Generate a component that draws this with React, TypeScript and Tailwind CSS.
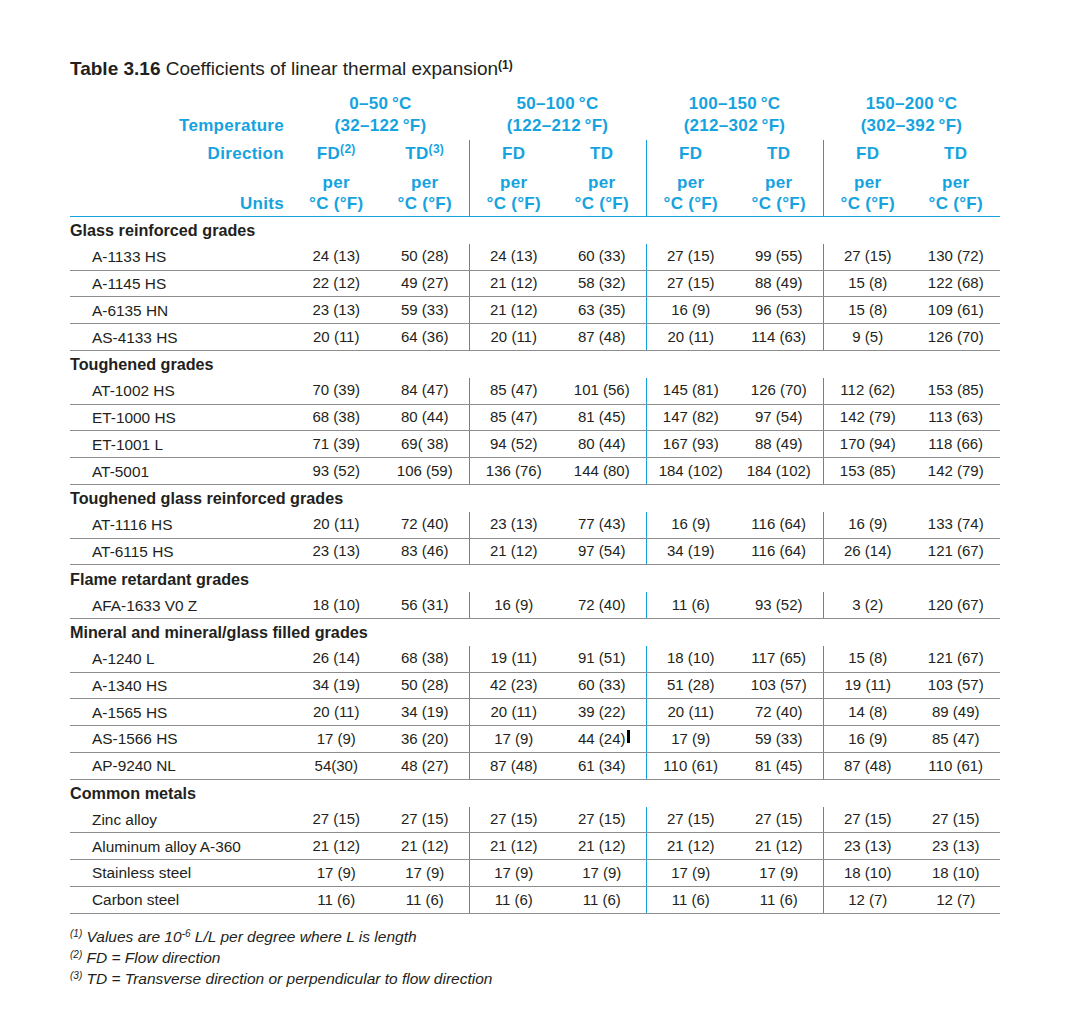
import React from 'react';

type Row = { name: string; v: string[] };
type Section = { title: string; rows: Row[] };

const sections: Section[] = [
  {
    title: 'Glass reinforced grades',
    rows: [
      { name: 'A-1133 HS', v: ['24 (13)', '50 (28)', '24 (13)', '60 (33)', '27 (15)', '99 (55)', '27 (15)', '130 (72)'] },
      { name: 'A-1145 HS', v: ['22 (12)', '49 (27)', '21 (12)', '58 (32)', '27 (15)', '88 (49)', '15 (8)', '122 (68)'] },
      { name: 'A-6135 HN', v: ['23 (13)', '59 (33)', '21 (12)', '63 (35)', '16 (9)', '96 (53)', '15 (8)', '109 (61)'] },
      { name: 'AS-4133 HS', v: ['20 (11)', '64 (36)', '20 (11)', '87 (48)', '20 (11)', '114 (63)', '9 (5)', '126 (70)'] },
    ],
  },
  {
    title: 'Toughened grades',
    rows: [
      { name: 'AT-1002 HS', v: ['70 (39)', '84 (47)', '85 (47)', '101 (56)', '145 (81)', '126 (70)', '112 (62)', '153 (85)'] },
      { name: 'ET-1000 HS', v: ['68 (38)', '80 (44)', '85 (47)', '81 (45)', '147 (82)', '97 (54)', '142 (79)', '113 (63)'] },
      { name: 'ET-1001 L', v: ['71 (39)', '69( 38)', '94 (52)', '80 (44)', '167 (93)', '88 (49)', '170 (94)', '118 (66)'] },
      { name: 'AT-5001', v: ['93 (52)', '106 (59)', '136 (76)', '144 (80)', '184 (102)', '184 (102)', '153 (85)', '142 (79)'] },
    ],
  },
  {
    title: 'Toughened glass reinforced grades',
    rows: [
      { name: 'AT-1116 HS', v: ['20 (11)', '72 (40)', '23 (13)', '77 (43)', '16 (9)', '116 (64)', '16 (9)', '133 (74)'] },
      { name: 'AT-6115 HS', v: ['23 (13)', '83 (46)', '21 (12)', '97 (54)', '34 (19)', '116 (64)', '26 (14)', '121 (67)'] },
    ],
  },
  {
    title: 'Flame retardant grades',
    rows: [
      { name: 'AFA-1633 V0 Z', v: ['18 (10)', '56 (31)', '16 (9)', '72 (40)', '11 (6)', '93 (52)', '3 (2)', '120 (67)'] },
    ],
  },
  {
    title: 'Mineral and mineral/glass filled grades',
    rows: [
      { name: 'A-1240 L', v: ['26 (14)', '68 (38)', '19 (11)', '91 (51)', '18 (10)', '117 (65)', '15 (8)', '121 (67)'] },
      { name: 'A-1340 HS', v: ['34 (19)', '50 (28)', '42 (23)', '60 (33)', '51 (28)', '103 (57)', '19 (11)', '103 (57)'] },
      { name: 'A-1565 HS', v: ['20 (11)', '34 (19)', '20 (11)', '39 (22)', '20 (11)', '72 (40)', '14 (8)', '89 (49)'] },
      { name: 'AS-1566 HS', v: ['17 (9)', '36 (20)', '17 (9)', '44 (24)|', '17 (9)', '59 (33)', '16 (9)', '85 (47)'] },
      { name: 'AP-9240 NL', v: ['54(30)', '48 (27)', '87 (48)', '61 (34)', '110 (61)', '81 (45)', '87 (48)', '110 (61)'] },
    ],
  },
  {
    title: 'Common metals',
    rows: [
      { name: 'Zinc alloy', v: ['27 (15)', '27 (15)', '27 (15)', '27 (15)', '27 (15)', '27 (15)', '27 (15)', '27 (15)'] },
      { name: 'Aluminum alloy A-360', v: ['21 (12)', '21 (12)', '21 (12)', '21 (12)', '21 (12)', '21 (12)', '23 (13)', '23 (13)'] },
      { name: 'Stainless steel', v: ['17 (9)', '17 (9)', '17 (9)', '17 (9)', '17 (9)', '17 (9)', '18 (10)', '18 (10)'] },
      { name: 'Carbon steel', v: ['11 (6)', '11 (6)', '11 (6)', '11 (6)', '11 (6)', '11 (6)', '12 (7)', '12 (7)'] },
    ],
  },
];

const temps = [
  { c: '0\u201350\u2009°C', f: '(32\u2013122\u2009°F)' },
  { c: '50\u2013100\u2009°C', f: '(122\u2013212\u2009°F)' },
  { c: '100\u2013150\u2009°C', f: '(212\u2013302\u2009°F)' },
  { c: '150\u2013200\u2009°C', f: '(302\u2013392\u2009°F)' },
];

function Value({ text }: { text: string }) {
  if (text.endsWith('|')) {
    return (
      <span className="relative">
        {text.slice(0, -1)}
        <span className="absolute left-full top-[2px] ml-[1px] h-[13px] w-[3px] bg-black" />
      </span>
    );
  }
  return <span>{text}</span>;
}

export default function App() {
  return (
    <div className="min-h-[1016px] w-[1068px] bg-white pl-[70px] pt-[57px] font-['Liberation_Sans',Arial,sans-serif] text-[#231f20]">
      <h1 className="text-[19px] leading-[24px]">
        <span className="font-bold">Table 3.16</span> Coefficients of linear thermal expansion
        <sup className="text-[12px] font-bold">(1)</sup>
      </h1>

      <div className="mt-[12px] w-[930px]">
        {/* Temperature row */}
        <div className="grid h-[47px] grid-cols-[222px_repeat(4,177px)] text-[17px] font-bold leading-[22px] tracking-[0.3px] text-[#15a3df]">
          <div className="pr-[8px] pt-[22px] text-right">Temperature</div>
          {temps.map((t) => (
            <div key={t.c} className="text-center">
              <div>{t.c}</div>
              <div>{t.f}</div>
            </div>
          ))}
        </div>

        {/* Direction row */}
        <div className="grid h-[27px] grid-cols-[222px_repeat(8,88.5px)] text-[17px] font-bold leading-[27px] tracking-[0.3px] text-[#15a3df]">
          <div className="pr-[8px] text-right">Direction</div>
          {[0, 1, 2, 3, 4, 5, 6, 7].map((i) => (
            <div
              key={i}
              className={i > 0 && i % 2 === 0 ? 'border-l border-[#15a3df] text-center' : 'text-center'}
            >
              {i % 2 === 0 ? 'FD' : 'TD'}
              {i === 0 && <sup className="text-[12px]">(2)</sup>}
              {i === 1 && <sup className="text-[12px]">(3)</sup>}
            </div>
          ))}
        </div>

        {/* Units row */}
        <div className="grid h-[50px] grid-cols-[222px_repeat(8,88.5px)] border-b border-[#15a3df] text-[17px] font-bold leading-[21px] tracking-[0.3px] text-[#15a3df]">
          <div className="pr-[8px] pt-[26px] text-right">Units</div>
          {[0, 1, 2, 3, 4, 5, 6, 7].map((i) => (
            <div
              key={i}
              className={
                i > 0 && i % 2 === 0
                  ? 'border-l border-[#15a3df] pt-[5px] text-center'
                  : 'pt-[5px] text-center'
              }
            >
              <div>per</div>
              <div>°C (°F)</div>
            </div>
          ))}
        </div>

        {sections.map((s) => (
          <div key={s.title}>
            <div className="flex h-[26.8px] items-center text-[16.2px] font-bold">{s.title}</div>
            {s.rows.map((r) => (
              <div
                key={r.name}
                className="grid h-[26.8px] grid-cols-[222px_repeat(8,88.5px)] items-stretch border-b border-[#8d8d8d] text-[15px]"
              >
                <div className="flex items-center pl-[22px] text-[15.4px]">{r.name}</div>
                {r.v.map((val, i) => (
                  <div
                    key={i}
                    className={
                      i > 0 && i % 2 === 0
                        ? 'flex items-center justify-center border-l border-[#15a3df]'
                        : 'flex items-center justify-center'
                    }
                  >
                    <Value text={val} />
                  </div>
                ))}
              </div>
            ))}
          </div>
        ))}
      </div>

      <div className="mt-[12px] text-[15.5px] italic leading-[21px]">
        <div>
          <sup className="text-[10px]">(1)</sup> Values are 10<sup className="text-[10px]">-6</sup> L/L per degree where L is length
        </div>
        <div>
          <sup className="text-[10px]">(2)</sup> FD = Flow direction
        </div>
        <div>
          <sup className="text-[10px]">(3)</sup> TD = Transverse direction or perpendicular to flow direction
        </div>
      </div>
    </div>
  );
}
